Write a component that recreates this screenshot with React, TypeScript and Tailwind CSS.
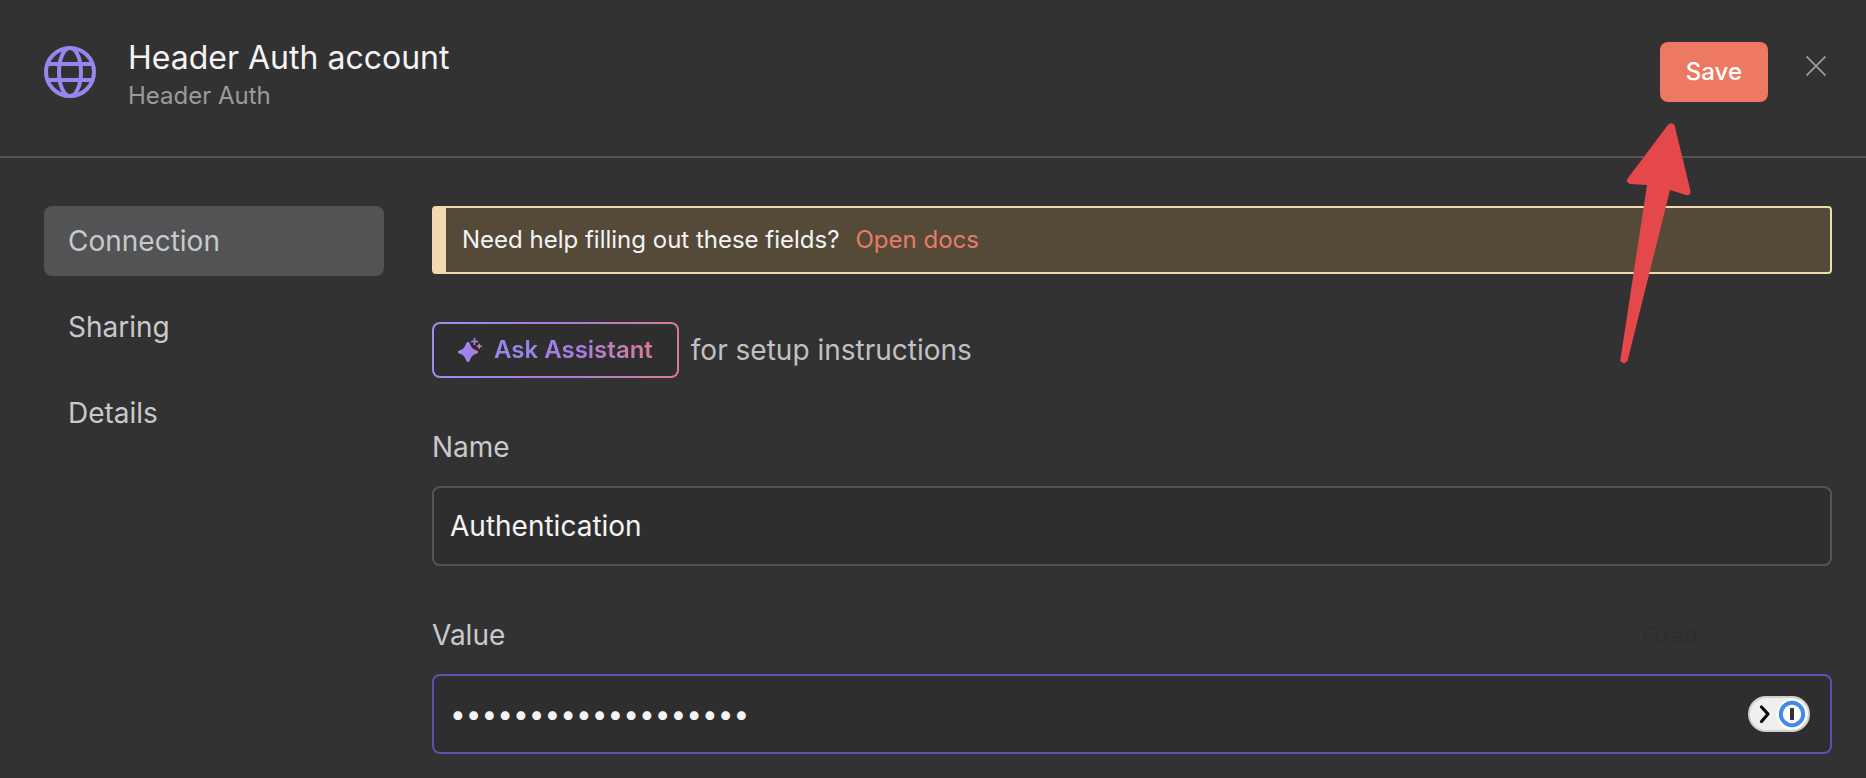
import { useState } from 'react';

const TABS = ['Connection', 'Sharing', 'Details'];

function GlobeIcon() {
  return (
    <svg width="52" height="52" viewBox="0 0 52 52" fill="none" stroke="#9687ee" strokeWidth="4" aria-hidden="true">
      <circle cx="26" cy="26" r="24" />
      <ellipse cx="26" cy="26" rx="11" ry="24" />
      <path d="M4 18H48M4 34H48" />
    </svg>
  );
}

function SparkIcon() {
  return (
    <svg width="24" height="24" viewBox="0 0 24 24" fill="none" aria-hidden="true">
      <defs>
        <linearGradient id="spark" x1="0" y1="0" x2="22" y2="0" gradientUnits="userSpaceOnUse">
          <stop offset="0" stopColor="#9a8cf0" />
          <stop offset="0.6" stopColor="#a67cec" />
          <stop offset="1" stopColor="#d27a9c" />
        </linearGradient>
      </defs>
      <path
        d="M10 4C11 4 11.500 4.500 12 6C13 9 14.500 11 18 12.200C19.600 12.700 20 13.200 20 14C20 14.800 19.600 15.300 18 15.800C14.500 17 13 19 12 22C11.500 23.500 11 24 10 24C9 24 8.500 23.500 8 22C7 19 5.500 17 2 15.800C0.400 15.300 0 14.800 0 14C0 13.200 0.400 12.700 2 12.200C5.500 11 7 9 8 6C8.500 4.500 9 4 10 4Z"
        fill="url(#spark)"
      />
      <path d="M16.500 0V7M13 3.500H20" stroke="#a884e6" strokeWidth="1.600" />
      <path d="M21.300 5.700V10.700M18.800 8.200H23.800" stroke="#d07fa4" strokeWidth="1.600" />
    </svg>
  );
}

// 1Password badge shown at the end of the secret field
function PasswordManagerBadge() {
  return (
    <svg width="62" height="36" viewBox="0 0 62 36" fill="none" aria-hidden="true">
      <rect x="1" y="1" width="60" height="34" rx="17" fill="#efefef" stroke="#cfcfcf" strokeWidth="2" />
      <path d="M13.500 11L20 18L13.500 25.500" stroke="#0a0a0a" strokeWidth="3.200" strokeLinecap="round" strokeLinejoin="round" />
      <circle cx="44" cy="18" r="15.500" fill="#fff" />
      <circle cx="44" cy="18" r="11.200" fill="#fff" stroke="#4489e8" strokeWidth="4" />
      <rect x="42" y="12" width="4" height="12" rx="0.500" fill="#333" />
    </svg>
  );
}

function PointerArrow() {
  return (
    <svg
      className="pointer-events-none absolute top-[122px] right-[172px]"
      width="74"
      height="244"
      viewBox="0 0 74 244"
      aria-hidden="true"
    >
      <path
        d="M47.500 3.500Q51 -0.500 54.500 3L70.500 69Q71 74 66 73L50 68L7.500 239Q4 243 0.200 239L27 63L10 62Q5 60 8 56Z"
        fill="#e5484b"
      />
    </svg>
  );
}

export default function App() {
  const [tab, setTab] = useState('Connection');
  const [name, setName] = useState('Authentication');
  const [value, setValue] = useState('header-secret-value');

  return (
    <div className="relative min-h-screen bg-[#323232] font-['Inter',sans-serif] text-[#f4f4f6]">
      <header className="flex h-[158px] items-start border-b-2 border-[#555555] pr-[34px] pl-11">
        <div className="mt-[46px]">
          <GlobeIcon />
        </div>
        <div className="mt-[38px] ml-8 flex-1">
          <h1 className="text-[32px] leading-[40px]">Header Auth account</h1>
          <p className="text-2xl leading-[36px] text-[#9a9b9e]">Header Auth</p>
        </div>
        <button className="mt-[42px] h-[60px] rounded-lg bg-[#ee7963] px-[26px] text-2xl font-medium text-white">
          Save
        </button>
        <button aria-label="Close" className="mt-[50px] ml-8 flex size-8 items-center justify-center">
          <svg width="20" height="20" viewBox="0 0 20 20" stroke="#9a9b9d" strokeWidth="1.800" aria-hidden="true">
            <path d="M0.500 0.500L19.500 19.500M19.500 0.500L0.500 19.500" />
          </svg>
        </button>
      </header>

      <div className="flex gap-12 pt-12 pr-[34px] pl-11">
        <nav className="flex w-[340px] shrink-0 flex-col gap-4">
          {TABS.map((item) => (
            <button
              key={item}
              onClick={() => setTab(item)}
              className={`h-[70px] rounded-lg px-6 text-left text-[28px] text-[#c8c9cd] ${item === tab ? 'bg-[#525354]' : ''}`}
            >
              {item}
            </button>
          ))}
        </nav>

        <main className="min-w-0 flex-1">
          <div className="flex h-[68px] items-center gap-4 rounded-[4px] border-2 border-l-14 border-[#f2d9b0] bg-[#554a38] pl-4 text-2xl">
            <span>Need help filling out these fields?</span>
            <a href="#docs" className="text-[#e97b66]">
              Open docs
            </a>
          </div>

          <div className="mt-12 flex items-center gap-3">
            <button className="rounded-lg bg-linear-to-r from-[#9a8ff0] via-[#a87be0] to-[#d97c94] p-[2px]">
              <span className="flex h-[52px] items-center gap-3 rounded-md bg-[#2e2e2e] px-6">
                <SparkIcon />
                <span className="bg-linear-to-r from-[#9389ec] via-[#a67ce8] to-[#d97c90] bg-clip-text text-2xl font-semibold text-transparent">
                  Ask Assistant
                </span>
              </span>
            </button>
            <span className="text-[28px] leading-[40px] text-[#c0c1c4]">for setup instructions</span>
          </div>

          <div className="mt-12">
            <label htmlFor="name" className="block text-[28px] leading-[42px] text-[#c8c9cf]">
              Name
            </label>
            <input
              id="name"
              value={name}
              onChange={(e) => setName(e.target.value)}
              className="mt-[18px] h-20 w-full rounded-lg border-2 border-[#555555] bg-[#2e2e2e] px-4 text-[28px] outline-none"
            />
          </div>

          <div className="mt-12 pb-6">
            <div className="flex items-center justify-between">
              <label htmlFor="value" className="text-[28px] leading-[42px] text-[#c8c9cd]">
                Value
              </label>
              <div className="flex gap-3 pr-2 text-[22px] leading-[28px] text-[#2e2e2e]">
                <span className="border-l-2 border-[#303030] pl-8">Fixed</span>
                <span className="text-[#303030]">Expression</span>
              </div>
            </div>
            <div className="relative mt-[18px]">
              <input
                id="value"
                type="password"
                value={value}
                onChange={(e) => setValue(e.target.value)}
                className="h-20 w-full rounded-lg border-2 border-[#5f4fae] bg-[#2e2e2e] pr-24 pl-4 text-[28px] outline-none"
              />
              <button aria-label="Fill from password manager" className="absolute top-[22px] right-[22px]">
                <PasswordManagerBadge />
              </button>
            </div>
          </div>
        </main>
      </div>

      <PointerArrow />
    </div>
  );
}
